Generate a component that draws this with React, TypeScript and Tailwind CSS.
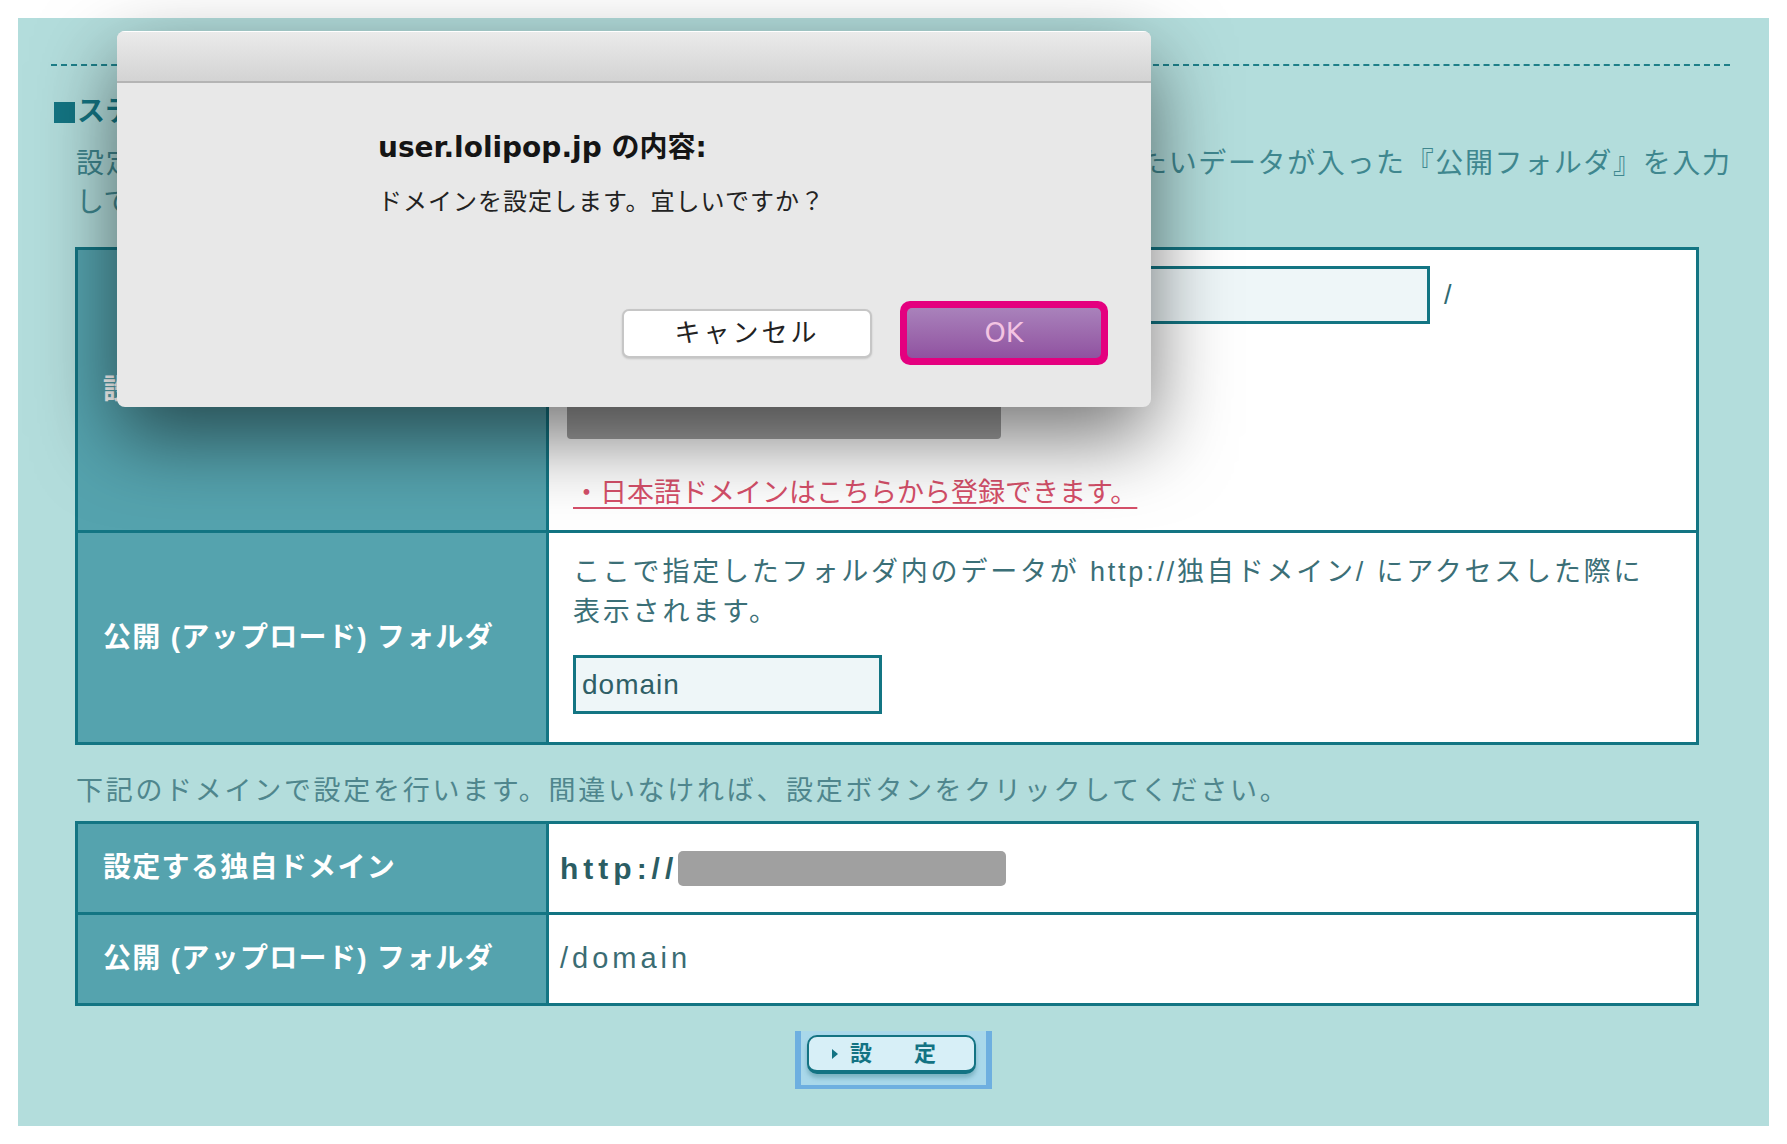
import type { ReactNode } from 'react'

export default function App() {
  return (
    <div className="relative h-[1144px] w-full overflow-hidden bg-white pl-[18px] pt-[18px] font-['Liberation_Sans','Noto_Sans_CJK_JP',sans-serif]">
      <section className="flex h-[1108px] w-[1751px] flex-col bg-[#b3dddc] pt-[46px]">
        <div className="ml-[33px] w-[1679px] border-t-2 border-dashed border-[#1e7f89]" />

        <h2 className="ml-[36px] mt-[28px] flex items-center text-[28px] font-bold leading-[36px] text-[#137583]">
          <span className="mr-[2px] inline-block h-[21px] w-[21px] bg-[#137583]" />
          ステップ２：独自ドメインの設定
        </h2>

        <div className="ml-[58px] mt-[14px] text-[28px] leading-[39px] text-[#3f878f]">
          <p className="w-[1654px] [text-align-last:justify]">
            設定したい独自ドメインを選択して、そのドメインでアクセスした際に表示させたいデータが入った『公開フォルダ』を入力
          </p>
          <p>してください。</p>
        </div>

        {/* 入力テーブル */}
        <div className="ml-[57px] mt-[25px] w-[1624px] border-[3px] border-[#137583] bg-white">
          <div className="grid h-[280px] grid-cols-[468px_1fr]">
            <HeadCell>設定する独自ドメイン</HeadCell>
            <div className="border-l-[3px] border-[#137583] pl-[24px] pt-[16px]">
              <div className="flex items-center gap-[14px]">
                <div className="h-[58px] w-[857px] border-[3px] border-[#137583] bg-[#eef6f8]" />
                <span className="text-[27px] text-[#2f6a72]">/</span>
              </div>
              <div className="-ml-[6px] mt-[79px] h-[36px] w-[434px] rounded-[4px] bg-[#a3a3a3]" />
              <a
                href="#"
                className="mt-[36px] block text-[27px] leading-[36px] text-[#d6506a] underline decoration-2 underline-offset-[5px]"
              >
                ・日本語ドメインはこちらから登録できます。
              </a>
            </div>
          </div>

          <div className="grid h-[212px] grid-cols-[468px_1fr] border-t-[3px] border-[#137583]">
            <HeadCell>
              公開 <span className="font-['Liberation_Sans'] font-bold">(</span>アップロード
              <span className="font-['Liberation_Sans'] font-bold">)</span> フォルダ
            </HeadCell>
            <div className="border-l-[3px] border-[#137583] pl-[24px] pt-[19px]">
              <p className="text-[27px] leading-[40px] tracking-[2.8px] text-[#3b6f77]">
                ここで指定したフォルダ内のデータが http://独自ドメイン/ にアクセスした際に
                <br />
                表示されます。
              </p>
              <div className="mt-[23px] flex h-[59px] w-[309px] items-center border-[3px] border-[#137583] bg-[#eef6f8] pl-[6px] text-[28px] tracking-[1px] text-[#2f5f66]">
                domain
              </div>
            </div>
          </div>
        </div>

        <p className="ml-[58px] mt-[26px] text-[27px] leading-[40px] tracking-[2.7px] text-[#4f868d]">
          下記のドメインで設定を行います。間違いなければ、設定ボタンをクリックしてください。
        </p>

        {/* 確認テーブル */}
        <div className="ml-[57px] mt-[10px] w-[1624px] border-[3px] border-[#137583] bg-white">
          <div className="grid h-[88px] grid-cols-[468px_1fr]">
            <HeadCell>設定する独自ドメイン</HeadCell>
            <div className="flex items-center border-l-[3px] border-[#137583] pl-[11px]">
              <span className="text-[30px] font-bold tracking-[5px] text-[#2b5d63]">http://</span>
              <span className="h-[35px] w-[328px] rounded-[5px] bg-[#a0a0a0]" />
            </div>
          </div>
          <div className="grid h-[91px] grid-cols-[468px_1fr] border-t-[3px] border-[#137583]">
            <HeadCell>
              公開 <span className="font-['Liberation_Sans'] font-bold">(</span>アップロード
              <span className="font-['Liberation_Sans'] font-bold">)</span> フォルダ
            </HeadCell>
            <div className="flex items-center border-l-[3px] border-[#137583] pl-[11px] text-[29px] tracking-[4px] text-[#3b6c73]">
              /domain
            </div>
          </div>
        </div>

        <SubmitButton />
      </section>

      <ConfirmDialog />
    </div>
  )
}

function HeadCell({ children }: { children: ReactNode }) {
  return (
    <div className="flex items-center bg-[#55a3ae] pl-[25px] text-[28px] font-bold tracking-[1.3px] text-white">
      <span>{children}</span>
    </div>
  )
}

function SubmitButton() {
  return (
    <div className="mt-[25px] h-[58px] w-[197px] self-center border-x-[6px] border-b-[4px] border-[#6eafe0] bg-[#a9d8ea] pl-[6px] pt-[4px]">
      <button
        type="button"
        className="flex h-[39px] w-[169px] items-center rounded-[10px] border-2 border-b-[4px] border-[#137383] bg-[#d7eff7] pl-[23px] text-[22px] font-bold leading-none text-[#137383] shadow-[0_4px_4px_rgba(40,110,120,0.35)]"
      >
        <span className="mr-[12px] h-0 w-0 border-y-[5px] border-l-[6px] border-y-transparent border-l-[#137383]" />
        <span>設</span>
        <span className="ml-[42px]">定</span>
      </button>
    </div>
  )
}

function ConfirmDialog() {
  return (
    <div className="absolute left-[117px] top-[31px] h-[376px] w-[1034px] overflow-hidden rounded-[8px] bg-[#e8e8e8] font-['DejaVu_Sans','Noto_Sans_CJK_JP',sans-serif] shadow-[0_30px_80px_rgba(0,0,0,0.55)]">
      <div className="h-[52px] border-b-2 border-t border-b-[#b4b4b4] border-t-white bg-linear-to-b from-[#ebebeb] to-[#d3d3d3]" />

      <div className="pl-[261px] pt-[48px]">
        <p className="text-[28px] font-bold leading-[34px] text-[#151515]">user.lolipop.jp の内容:</p>
        <p className="mt-[22px] text-[24px] leading-[30px] tracking-[1px] text-[#222]">ドメインを設定します。宜しいですか？</p>
      </div>

      <div className="mt-[84px] flex items-center justify-end gap-[28px] pr-[43px]">
        <button
          type="button"
          className="h-[49px] w-[250px] rounded-[7px] border-2 border-[#c6c6c6] bg-white text-[26px] tracking-[3px] text-[#222] shadow-[0_1px_2px_rgba(0,0,0,0.15)]"
        >
          キャンセル
        </button>
        <div className="rounded-[10px] bg-[#e4007f] p-[7px]">
          <button
            type="button"
            className="h-[50px] w-[194px] rounded-[5px] bg-linear-to-b from-[#a982bb] to-[#9052a0] text-[27px] text-[#f4c4e2]"
          >
            OK
          </button>
        </div>
      </div>
    </div>
  )
}
